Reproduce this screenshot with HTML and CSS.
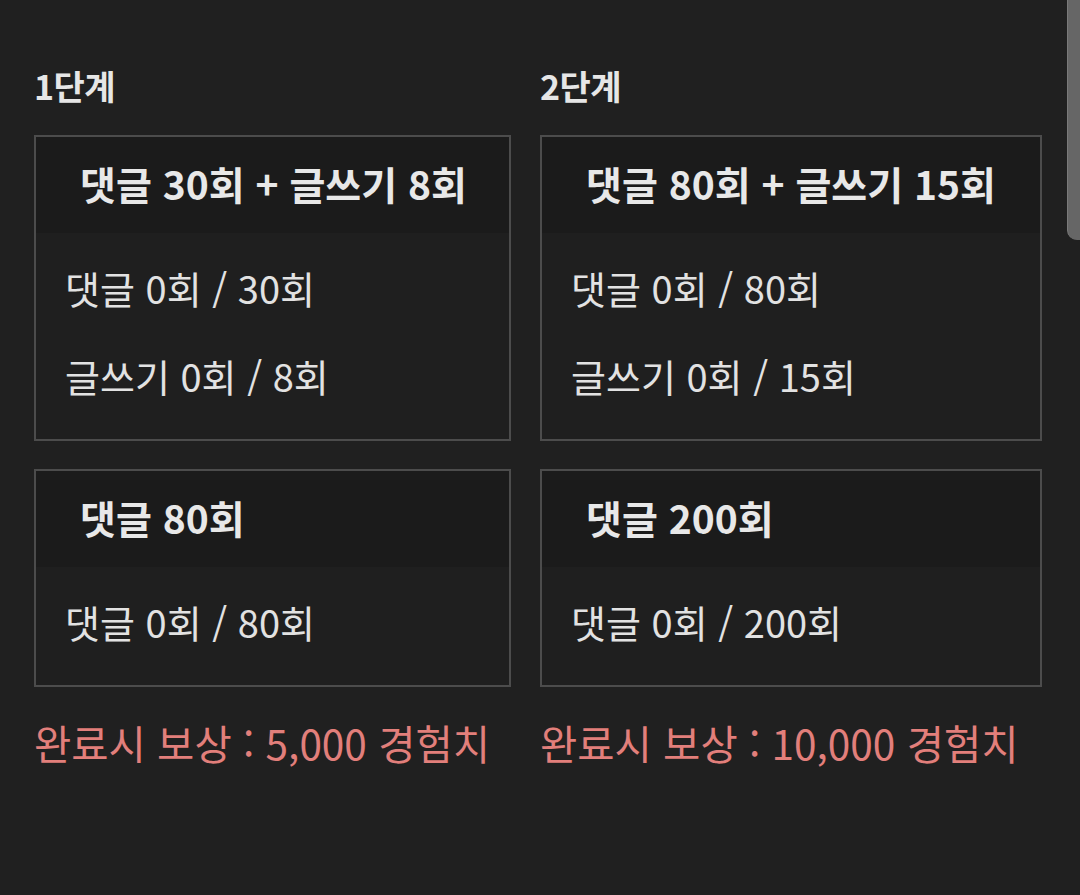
FILE: index.html
```html
<!DOCTYPE html>
<html lang="ko">
<head>
<meta charset="utf-8">
<link rel="stylesheet" href="styles.css">
</head>
<body>
<div class="page">
  <div class="col col-1">
    <div class="stage">1단계</div>
    <div class="card">
      <div class="card-head">댓글 30회 + 글쓰기 8회</div>
      <div class="card-body">
        <div class="row">댓글 0회 / 30회</div>
        <div class="row">글쓰기 0회 / 8회</div>
      </div>
    </div>
    <div class="card">
      <div class="card-head">댓글 80회</div>
      <div class="card-body">
        <div class="row">댓글 0회 / 80회</div>
      </div>
    </div>
    <div class="reward">완료시 보상 : 5,000 경험치</div>
  </div>
  <div class="col col-2">
    <div class="stage">2단계</div>
    <div class="card">
      <div class="card-head">댓글 80회 + 글쓰기 15회</div>
      <div class="card-body">
        <div class="row">댓글 0회 / 80회</div>
        <div class="row">글쓰기 0회 / 15회</div>
      </div>
    </div>
    <div class="card">
      <div class="card-head">댓글 200회</div>
      <div class="card-body">
        <div class="row">댓글 0회 / 200회</div>
      </div>
    </div>
    <div class="reward">완료시 보상 : 10,000 경험치</div>
  </div>
</div>
<div class="scroll-thumb"></div>
</body>
</html>
```
FILE: styles.css
```css
html, body {
  margin: 0;
  padding: 0;
  background: #202020;
  height: 100%;
  overflow: hidden;
}
body {
  font-family: "Noto Sans CJK KR", "Noto Sans", sans-serif;
  color: #e6e6e6;
}
.page {
  display: flex;
  gap: 29px;
  padding: 64px 0 0 34px;
}
.col {
  display: flex;
  flex-direction: column;
}
.col-1 { width: 477px; }
.col-2 { width: 502px; }
.stage {
  font-size: 34px;
  font-weight: 700;
  line-height: 44px;
  height: 44px;
  margin-bottom: 27px;
  letter-spacing: -0.5px;
}
.card {
  border: 2px solid #4c4c4c;
  background: #1f1f1f;
  margin-bottom: 28px;
}
.card-head {
  background: #1b1b1b;
  height: 96px;
  line-height: 92px;
  padding-left: 44px;
  font-size: 39px;
  font-weight: 700;
  color: #e8e8e8;
  white-space: nowrap;
}
.card-body {
  padding: 11px 0 19px 29px;
}
.row {
  height: 88px;
  line-height: 88px;
  font-size: 38px;
  font-weight: 400;
  color: #e2e2e2;
  white-space: nowrap;
}
.reward {
  margin-top: -2px;
  font-size: 40.5px;
  line-height: 60px;
  color: #e27f7b;
  white-space: nowrap;
}
.scroll-thumb {
  position: absolute;
  top: 0;
  right: 0;
  width: 12px;
  height: 240px;
  background: #666666;
  border-left: 1px solid #7a7a7a;
  border-bottom-left-radius: 10px;
}
```
